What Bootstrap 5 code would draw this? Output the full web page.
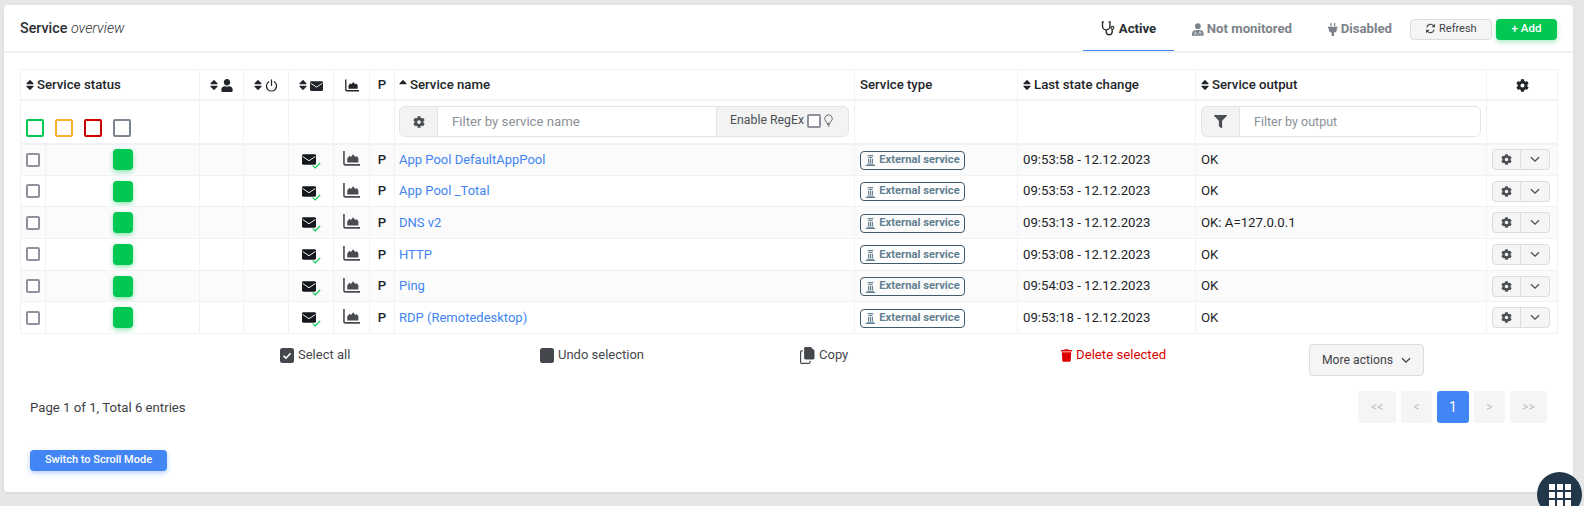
<!DOCTYPE html>
<html lang="en">
<head>
    <meta charset="UTF-8">
    <meta name="viewport" content="width=device-width, initial-scale=1.0">
    <title>Service overview</title>
    <link href="https://cdn.jsdelivr.net/npm/bootstrap@5.3.3/dist/css/bootstrap.min.css" rel="stylesheet">
    <style>
        html, body { height: 100%; overflow: hidden; }
        body {
            background-color: #e4e6e8;
            font-family: Roboto, "Liberation Sans", sans-serif;
            font-size: 13px;
            color: #212529;
        }
        svg { display: inline-block; vertical-align: middle; fill: currentColor; }

        .page-card {
            margin: 5px 0 0 4px;
            width: 1569px;
            height: 487px;
            background: #fff;
            border: 0;
            border-radius: 4px;
            box-shadow: 0 1px 3px rgba(0, 0, 0, .08);
        }
        .head-bar {
            height: 48px;
            padding: 2px 16px 0;
            background: #fff;
            border-bottom: 2px solid #eff1f3;
        }
        .head-title { font-size: 14.3px; font-weight: 500; color: #2b2f33; }
        .head-title em { font-weight: 300; }

        .tab-item {
            display: flex;
            align-items: center;
            justify-content: center;
            gap: 3px;
            height: 44px;
            font-size: 13.2px;
            font-weight: 700;
            color: #7b8289;
            text-decoration: none;
            white-space: nowrap;
        }
        .tab-active { width: 91px; color: #2b2f33; border-bottom: 1px solid #4285f4; }
        .tab-second { width: 100px; margin-left: 18px; }
        .tab-third { width: 64px; margin-left: 36px; margin-right: 18px; }

        .btn-plain {
            --bs-btn-bg: #f5f5f5;
            --bs-btn-border-color: #dcdcdc;
            --bs-btn-color: #3f4347;
            --bs-btn-hover-bg: #ececec;
            --bs-btn-hover-border-color: #dcdcdc;
            --bs-btn-border-radius: 4px;
        }
        .btn-refresh { width: 82px; height: 21px; margin-right: 4px; padding: 0; font-size: 11px; }
        .btn-add {
            width: 61px;
            height: 21px;
            padding: 0;
            font-size: 11.5px;
            font-weight: 500;
            color: #fff;
            background: #00c853;
            border: 0;
            border-radius: 4px;
            box-shadow: 0 2px 5px rgba(0, 200, 83, .35);
        }

        .body-wrap { padding: 16px 16px 0; }

        .svc-table {
            table-layout: fixed;
            width: 1537px;
            margin: 0;
            border-color: #f0f2f5;
            --bs-table-striped-bg: #fbfbfb;
            --bs-table-color: #212529;
            --bs-table-striped-color: #212529;
        }
        .svc-table th, .svc-table td {
            padding: 0 5px;
            vertical-align: middle;
            font-size: 13.2px;
            border-color: #f0f2f5;
        }
        .svc-table tbody tr { height: 31.7px; }
        .svc-table thead tr.head-row { height: 30px; }
        .svc-table thead tr.head-row th { padding-top: 2px; font-weight: 500; border-bottom: 2px solid #f1f2f6; white-space: nowrap; }
        .svc-table thead tr.filter-row { height: 44px; }
        .svc-table thead tr.filter-row th { border-bottom: 2px solid #f1f2f6; font-weight: 400; }
        .svc-table .name-cell { padding-left: 4px; }

        .c-check { width: 25px; }
        .c-state { width: 154px; }
        .c-ack { width: 44px; }
        .c-down { width: 45px; }
        .c-notify { width: 45px; }
        .c-graph { width: 36px; }
        .c-passive { width: 25px; }
        .c-name { width: 460px; }
        .c-type { width: 163px; }
        .c-change { width: 178px; }
        .c-output { width: 291px; }
        .c-actions { width: 71px; }

        .sort-icon { width: 8px; height: 14px; margin-right: 3px; position: relative; top: -1px; }
        .p-mark { font-weight: 500; }

        .status-wrap { padding-top: 12px; gap: 11px; }
        .status-box {
            display: inline-block;
            width: 18px;
            height: 18px;
            border: 2px solid;
            border-radius: 2px;
        }
        .box-green { border-color: #00c853; }
        .box-orange { border-color: #ffb02e; }
        .box-red { border-color: #cc0000; }
        .box-gray { border-color: #7d8590; }

        .filter-group { height: 31px; flex-wrap: nowrap; }
        .filter-group .input-group-text {
            background: #f3f3f3;
            border-color: #e2e4e6;
            font-size: 12.3px;
            color: #4b4f54;
            border-width: 1px;
        }
        .filter-group .addon-icon { width: 39px; justify-content: center; padding: 0; }
        .filter-group .form-control {
            height: 31px;
            font-size: 12.5px;
            padding-left: 14px;
            border-color: #e2e4e6;
        }
        .filter-group .name-input { font-size: 13.2px; }
        .filter-group .form-control::placeholder { color: #8b9096; }
        .regex-addon { width: 133px; padding: 0 0 2px 13px; gap: 2px; }

        .row-check {
            display: block;
            width: 14px;
            height: 14px;
            border: 2px solid #8f929d;
            border-radius: 2px;
            background: #fff;
        }
        .regex-check { margin: 0 1px; }
        .status-dot {
            display: block;
            width: 20px;
            height: 21px;
            margin: 0 auto;
            background: #00c853;
            border-radius: 4px;
            box-shadow: 0 2px 5px rgba(0, 200, 83, .45);
        }
        .mail-wrap { display: inline-flex; align-items: flex-start; height: 18px; padding-top: 3px; vertical-align: middle; }
        .mail-icon { color: #15181d; }
        .mail-ok { color: #00c853; margin: 8px 0 0 -4px; }
        .chart-icon { color: #484b50; margin-bottom: 3px; }
        .svc-link { color: #4285f4; text-decoration: none; font-size: 13px; }
        .type-pill {
            display: inline-flex;
            align-items: center;
            justify-content: center;
            gap: 3px;
            width: 105px;
            height: 19px;
            vertical-align: middle;
            border: 1px solid #3f5b6e;
            border-radius: 4px;
            font-size: 11.2px;
            font-weight: 700;
            color: #628090;
        }
        .row-group { width: 59px; height: 21px; margin: 0; display: flex; }
        .row-group .btn {
            padding: 0;
            height: 21px;
            display: flex;
            align-items: center;
            justify-content: center;
            color: #4b4f54;
        }
        .row-group .btn:first-child { width: 29px; flex: none; }
        .row-group .btn:last-child { width: 30px; flex: none; }

        .bulk-row { padding-left: 260px; height: 57px; padding-top: 10px; color: #44484c; }
        .bulk-item { height: 22px; display: flex; align-items: center; gap: 4px; font-size: 13px; }
        .bulk-first { width: 260px; }
        .bulk-second { width: 260px; }
        .bulk-third { width: 261px; }
        .bulk-danger { width: 248px; color: #dc0000; font-size: 13.2px; }
        .btn-more {
            width: 115px;
            height: 32px;
            padding: 0;
            font-size: 12.2px;
            display: flex;
            align-items: center;
            justify-content: center;
            gap: 8px;
        }

        .foot-row { height: 32px; padding: 0 10px; }
        .entries { padding-top: 2px; font-size: 13.2px; color: #3d4145; }
        .pager { margin: 0; gap: 6px; }
        .pager .page-link {
            display: flex;
            align-items: center;
            justify-content: center;
            height: 32px;
            width: 31px;
            padding: 0;
            font-size: 12px;
            color: #bdbdbd;
            background: #f5f5f5;
            border: 0;
            border-radius: 3px !important;
        }
        .pager .page-first { width: 38px; }
        .pager .page-last { width: 37px; }
        .pager .page-item.active .page-link { width: 32px; background: #4285f4; color: #fff; font-size: 14px; }

        .btn-scroll {
            display: block;
            width: 137px;
            height: 21px;
            margin: 27px 0 0 10px;
            padding: 0;
            font-size: 11px;
            font-weight: 500;
            color: #fff;
            background: #4285f4;
            border: 0;
            border-radius: 4px;
            box-shadow: 0 2px 5px rgba(66, 133, 244, .4);
        }

        /* floating launcher sits over the page corner */
        .float-launcher {
            position: fixed;
            left: 1537px;
            top: 472px;
            width: 45px;
            height: 45px;
            border-radius: 50%;
            background: #22384a;
            display: grid;
            grid-template-columns: repeat(3, 6px);
            grid-auto-rows: 6px;
            gap: 2px;
            justify-content: center;
            align-content: start;
            padding-top: 12px;
        }
        .float-launcher span { background: #fff; }
    </style>
</head>
<body>

    <svg width="0" height="0" class="position-absolute">
        <symbol id="i-sort" viewBox="0 0 320 512"><path d="M41 288h238c21.4 0 32.1 25.9 17 41L177 448c-9.4 9.4-24.6 9.4-33.9 0L24 329c-15.1-15.1-4.4-41 17-41zm255-105L177 64c-9.4-9.4-24.6-9.4-33.9 0L24 183c-15.1 15.1-4.4 41 17 41h238c21.4 0 32.1-25.9 17-41z"/></symbol>
        <symbol id="i-sort-up" viewBox="0 0 320 512"><path d="M279 224H41c-21.4 0-32.1-25.9-17-41L143 64c9.4-9.4 24.6-9.4 33.9 0l119 119c15.2 15.1 4.5 41-16.9 41z"/></symbol>
        <symbol id="i-user" viewBox="0 0 448 512"><path d="M224 256c70.7 0 128-57.3 128-128S294.7 0 224 0 96 57.3 96 128s57.3 128 128 128zm89.6 32h-16.7c-22.2 10.2-46.9 16-72.9 16s-50.6-5.8-72.9-16h-16.7C60.2 288 0 348.2 0 422.4V464c0 26.5 21.5 48 48 48h352c26.5 0 48-21.5 48-48v-41.6c0-74.2-60.2-134.4-134.4-134.4z"/></symbol>
        <symbol id="i-power" viewBox="0 0 16 16"><path d="M4.6 3.400a6.200 6.200 0 1 0 6.800 0M8 1v7" fill="none" stroke="currentColor" stroke-width="1.500" stroke-linecap="round"/></symbol>
        <symbol id="i-mail" viewBox="0 0 16 12"><rect width="16" height="12" rx="1.600"/><path d="M.8 2.600 8 7.400l7.200-4.800" fill="none" stroke="#fff" stroke-width="1.100"/></symbol>
        <symbol id="i-check" viewBox="0 0 12 9"><path d="M1 4.600 4.200 7.600 11 1" fill="none" stroke="currentColor" stroke-width="1.600"/></symbol>
        <symbol id="i-chart" viewBox="0 0 16 14"><path d="M.9 0v11.600c0 .8.500 1.400 1.300 1.400H16" fill="none" stroke="currentColor" stroke-width="1.500"/><path d="M4 10.800V7l2-2.500 1.500 1L9.500 3l2 2.500 1.500-.8 1.500 2.300v3.300c0 .3-.2.500-.5.500H4z"/></symbol>
        <symbol id="i-gear" viewBox="0 0 512 512"><path d="M487.4 315.7l-42.6-24.6c4.3-23.2 4.3-47 0-70.2l42.6-24.6c4.9-2.8 7.1-8.6 5.5-14-11.1-35.6-30-67.8-54.7-94.6-3.8-4.1-10-5.1-14.8-2.3L380.8 110c-17.9-15.4-38.5-27.3-60.8-35.1V25.8c0-5.6-3.9-10.5-9.4-11.7-36.7-8.2-74.3-7.8-109.2 0-5.5 1.2-9.4 6.1-9.4 11.7V75c-22.2 7.9-42.8 19.8-60.8 35.1L88.7 85.5c-4.9-2.8-11-1.9-14.8 2.3-24.7 26.7-43.6 58.9-54.7 94.6-1.7 5.4.6 11.2 5.5 14L67.3 221c-4.3 23.2-4.3 47 0 70.2l-42.6 24.6c-4.9 2.8-7.1 8.6-5.5 14 11.1 35.6 30 67.8 54.7 94.6 3.8 4.1 10 5.1 14.8 2.3l42.6-24.6c17.9 15.4 38.5 27.3 60.8 35.1v49.2c0 5.6 3.9 10.5 9.4 11.7 36.7 8.2 74.3 7.8 109.2 0 5.5-1.2 9.4-6.1 9.4-11.7v-49.2c22.2-7.9 42.8-19.8 60.8-35.1l42.6 24.6c4.9 2.8 11 1.9 14.8-2.3 24.7-26.7 43.6-58.9 54.7-94.6 1.500-5.500-.7-11.300-5.600-14.100zM256 336c-44.100 0-80-35.900-80-80s35.900-80 80-80 80 35.900 80 80-35.900 80-80 80z"/></symbol>
        <symbol id="i-filter" viewBox="0 0 512 512"><path d="M487.976 0H24.028C2.71 0-8.047 25.866 7.058 40.971L192 225.941V432c0 7.831 3.821 15.17 10.237 19.662l80 55.98C298.02 518.69 320 507.493 320 487.98V225.941l184.947-184.97C520.021 25.896 509.338 0 487.976 0z"/></symbol>
        <symbol id="i-trash" viewBox="0 0 448 512"><path d="M432 32H312l-9.400-18.700A24 24 0 0 0 281.100 0H166.800a23.720 23.720 0 0 0-21.400 13.300L136 32H16A16 16 0 0 0 0 48v32a16 16 0 0 0 16 16h416a16 16 0 0 0 16-16V48a16 16 0 0 0-16-16zM53.200 467a48 48 0 0 0 47.900 45h245.800a48 48 0 0 0 47.900-45L416 128H32z"/></symbol>
        <symbol id="i-chev" viewBox="0 0 12 8"><path d="M1.200 1.400 6 6l4.800-4.600" fill="none" stroke="currentColor" stroke-width="1.600"/></symbol>
        <symbol id="i-steth" viewBox="0 0 14 15"><path d="M2.300 1H1v4.200a3.700 3.700 0 0 0 7.400 0V1H7.100M4.700 9v1.800a3 3 0 0 0 6 0V8.600" fill="none" stroke="currentColor" stroke-width="1.400"/><circle cx="10.900" cy="6.800" r="1.500" fill="none" stroke="currentColor" stroke-width="1.200"/></symbol>
        <symbol id="i-doc" viewBox="0 0 14 15"><circle cx="7" cy="3.600" r="3.400"/><path d="M0 15v-2.600C0 9.900 2 8 4.400 8h5.200C12 8 14 9.900 14 12.400V15z"/><path d="M4 8.500v3M3 13.500v-2h2v2M9.500 8.500v2.500M8 13.500v-1.200a1.500 1.500 0 0 1 3 0v1.200" fill="none" stroke="#fff" stroke-width=".7"/></symbol>
        <symbol id="i-plug" viewBox="0 0 12 16"><path d="M3 0h1.500v4H3zM7.500 0H9v4H7.500zM0 4.500h12v2h-1V8a4 4 0 0 1-3.500 3.900V16h-3v-4.100A4 4 0 0 1 1 8V6.500H0z"/></symbol>
        <symbol id="i-sync" viewBox="0 0 16 16"><path d="M2.600 6.400A5.600 5.600 0 0 1 12.700 4.300M13.400 9.600A5.600 5.600 0 0 1 3.300 11.700" fill="none" stroke="currentColor" stroke-width="1.500"/><path d="M14.500 1.200v5h-5zM1.500 14.800v-5h5z"/></symbol>
        <symbol id="i-bulb" viewBox="0 0 10 14"><path d="M5 .7a4.200 4.200 0 0 0-2.600 7.500c.5.500.7 1.300.8 1.900h3.600c.1-.6.300-1.400.8-1.900A4.200 4.200 0 0 0 5 .7zM3.400 11.500h3.200M4 13.200h2" fill="none" stroke="currentColor" stroke-width=".9"/></symbol>
        <symbol id="i-bank" viewBox="0 0 12 13"><path d="M3 1h6v1.300H3zM3.800 3.200h4.400v1.200H3.800zM3.300 5.200h1.300v4.900H3.300zM5.400 5.200h1.200v4.900H5.400zM7.400 5.200h1.300v4.900H7.400zM2.200 10.600h7.600v1H2.200zM.8 12h10.400v1H.8z"/></symbol>
        <symbol id="i-checked" viewBox="0 0 14 15"><rect width="14" height="15" rx="2.500"/><path d="M3.500 7.800 6 10.200l4.600-4.900" fill="none" stroke="#fff" stroke-width="1.600"/></symbol>
        <symbol id="i-solid" viewBox="0 0 14 15"><rect width="14" height="15" rx="2.500"/></symbol>
        <symbol id="i-copy" viewBox="0 0 15 17"><path d="M5.500 0h5.200L14.500 3.500V11c0 .8-.6 1.400-1.400 1.400H5.500c-.8 0-1.400-.6-1.400-1.400V1.400C4.100.6 4.700 0 5.500 0z"/><path d="M2.900 3.800H1.800C1 3.800.6 4.400.6 5v10.200c0 .7.500 1.200 1.200 1.200h7c.7 0 1.200-.5 1.200-1.200v-1.400" fill="none" stroke="currentColor" stroke-width="1.200"/></symbol>
    </svg>

    <div class="card page-card">
        <div class="card-header head-bar d-flex align-items-center">
            <div class="head-title me-auto">Service <em>overview</em></div>
            <a class="tab-item tab-active" href="#"><svg width="15" height="15"><use href="#i-steth"/></svg> Active</a>
            <a class="tab-item tab-second" href="#"><svg width="12" height="13"><use href="#i-doc"/></svg> Not monitored</a>
            <a class="tab-item tab-third" href="#"><svg width="10" height="13"><use href="#i-plug"/></svg> Disabled</a>
            <button class="btn btn-plain btn-refresh" type="button"><svg width="11" height="11"><use href="#i-sync"/></svg> Refresh</button>
            <button class="btn btn-add" type="button">+ Add</button>
        </div>

        <div class="card-body body-wrap">
            <table class="table table-bordered table-striped svc-table">
                <colgroup>
                    <col class="c-check"><col class="c-state"><col class="c-ack"><col class="c-down"><col class="c-notify"><col class="c-graph"><col class="c-passive"><col class="c-name"><col class="c-type"><col class="c-change"><col class="c-output"><col class="c-actions">
                </colgroup>
                <thead>
                    <tr class="head-row">
                        <th colspan="2"><svg class="sort-icon"><use href="#i-sort"/></svg>Service status</th>
                        <th class="text-center"><svg class="sort-icon"><use href="#i-sort"/></svg><svg width="12" height="13"><use href="#i-user"/></svg></th>
                        <th class="text-center"><svg class="sort-icon"><use href="#i-sort"/></svg><svg width="13" height="13"><use href="#i-power"/></svg></th>
                        <th class="text-center"><svg class="sort-icon"><use href="#i-sort"/></svg><svg width="13" height="10"><use href="#i-mail"/></svg></th>
                        <th class="text-center"><svg width="14" height="13"><use href="#i-chart"/></svg></th>
                        <th class="text-center">P</th>
                        <th class="name-cell"><svg class="sort-icon"><use href="#i-sort-up"/></svg>Service name</th>
                        <th>Service type</th>
                        <th><svg class="sort-icon"><use href="#i-sort"/></svg>Last state change</th>
                        <th><svg class="sort-icon"><use href="#i-sort"/></svg>Service output</th>
                        <th class="text-center"><svg width="13" height="13"><use href="#i-gear"/></svg></th>
                    </tr>
                    <tr class="filter-row">
                        <th colspan="2">
                            <div class="d-flex status-wrap">
                                <span class="status-box box-green"></span>
                                <span class="status-box box-orange"></span>
                                <span class="status-box box-red"></span>
                                <span class="status-box box-gray"></span>
                            </div>
                        </th>
                        <th></th><th></th><th></th><th></th><th></th>
                        <th class="name-cell">
                            <div class="input-group filter-group">
                                <span class="input-group-text addon-icon"><svg width="12" height="12"><use href="#i-gear"/></svg></span>
                                <input type="text" class="form-control name-input" placeholder="Filter by service name">
                                <span class="input-group-text regex-addon">Enable RegEx <span class="row-check regex-check"></span><svg width="9" height="13"><use href="#i-bulb"/></svg></span>
                            </div>
                        </th>
                        <th></th><th></th>
                        <th>
                            <div class="input-group filter-group">
                                <span class="input-group-text addon-icon"><svg width="13" height="13"><use href="#i-filter"/></svg></span>
                                <input type="text" class="form-control" placeholder="Filter by output">
                            </div>
                        </th>
                        <th></th>
                    </tr>
                </thead>
                <tbody id="serviceRows"></tbody>
            </table>

            <div class="d-flex bulk-row">
                <div class="bulk-item bulk-first"><svg width="14" height="15"><use href="#i-checked"/></svg> Select all</div>
                <div class="bulk-item bulk-second"><svg width="14" height="15"><use href="#i-solid"/></svg> Undo selection</div>
                <div class="bulk-item bulk-third"><svg width="15" height="17"><use href="#i-copy"/></svg> Copy</div>
                <div class="bulk-item bulk-danger"><svg width="11" height="13"><use href="#i-trash"/></svg> Delete selected</div>
                <button class="btn btn-plain btn-more" type="button">More actions <svg width="10" height="7"><use href="#i-chev"/></svg></button>
            </div>

            <div class="d-flex align-items-center justify-content-between foot-row">
                <div class="entries">Page 1 of 1, Total 6 entries</div>
                <ul class="pagination pager">
                    <li class="page-item"><a class="page-link page-first" href="#">&lt;&lt;</a></li>
                    <li class="page-item"><a class="page-link" href="#">&lt;</a></li>
                    <li class="page-item active"><a class="page-link" href="#">1</a></li>
                    <li class="page-item"><a class="page-link" href="#">&gt;</a></li>
                    <li class="page-item"><a class="page-link page-last" href="#">&gt;&gt;</a></li>
                </ul>
            </div>

            <button class="btn btn-scroll" type="button">Switch to Scroll Mode</button>
        </div>
    </div>

    <div class="float-launcher"><span></span><span></span><span></span><span></span><span></span><span></span><span></span><span></span><span></span></div>

    <script>
        var services = [
            ["App Pool DefaultAppPool", "09:53:58 - 12.12.2023", "OK"],
            ["App Pool _Total", "09:53:53 - 12.12.2023", "OK"],
            ["DNS v2", "09:53:13 - 12.12.2023", "OK: A=127.0.0.1"],
            ["HTTP", "09:53:08 - 12.12.2023", "OK"],
            ["Ping", "09:54:03 - 12.12.2023", "OK"],
            ["RDP (Remotedesktop)", "09:53:18 - 12.12.2023", "OK"]
        ];

        var html = "";
        for (var i = 0; i < services.length; i++) {
            html += '<tr>' +
                '<td><span class="row-check"></span></td>' +
                '<td><span class="status-dot"></span></td>' +
                '<td></td><td></td>' +
                '<td class="text-center"><span class="mail-wrap"><svg width="14" height="11" class="mail-icon"><use href="#i-mail"/></svg><svg width="9" height="7" class="mail-ok"><use href="#i-check"/></svg></span></td>' +
                '<td class="text-center"><svg width="17" height="15" class="chart-icon"><use href="#i-chart"/></svg></td>' +
                '<td class="text-center p-mark">P</td>' +
                '<td class="name-cell"><a class="svc-link" href="#">' + services[i][0] + '</a></td>' +
                '<td><span class="type-pill"><svg width="11" height="12"><use href="#i-bank"/></svg>External service</span></td>' +
                '<td>' + services[i][1] + '</td>' +
                '<td>' + services[i][2] + '</td>' +
                '<td><div class="btn-group row-group"><button class="btn btn-plain" type="button"><svg width="11" height="11"><use href="#i-gear"/></svg></button><button class="btn btn-plain" type="button"><svg width="10" height="7"><use href="#i-chev"/></svg></button></div></td>' +
                '</tr>';
        }
        document.getElementById("serviceRows").innerHTML = html;
    </script>
    <script src="https://cdn.jsdelivr.net/npm/bootstrap@5.3.3/dist/js/bootstrap.bundle.min.js"></script>
</body>
</html>
